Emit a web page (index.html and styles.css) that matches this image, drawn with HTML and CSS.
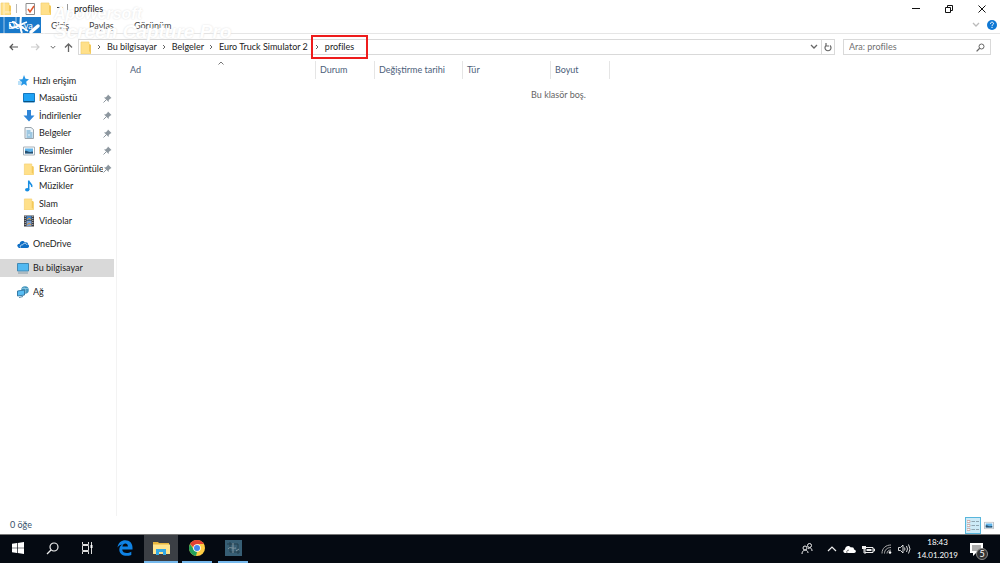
FILE: index.html
```html
<!DOCTYPE html>
<html lang="tr">
<head>
<meta charset="utf-8">
<meta name="viewport" content="width=device-width, initial-scale=1">
<title>profiles</title>
<link rel="stylesheet" href="styles.css">
</head>
<body>
<svg class="defs" aria-hidden="true">
  <symbol id="folder" viewBox="0 0 12 13"><path d="M1 1h8v2l2 1v9H1z" fill="#ffe08a"/><path d="M9 3v7l2 3V4z" fill="#f3c95c"/><path d="M1 1h8v2M1 1v12h10" fill="none" stroke="#f2cf70" stroke-width=".7"/></symbol>
  <symbol id="pin" viewBox="0 0 9 9"><path d="M5 .5 8.500 4l-1 .4-1.700 1.700-.2 1.900L1 3.400l1.900-.2L4.600 1.500z" fill="#8d979f"/><path d="M3.500 5.500.5 8.500" stroke="#8d979f"/></symbol>
  <symbol id="crumb" viewBox="0 0 4 6"><path d="m1 1 2 2-2 2" fill="none" stroke="#555" stroke-width=".9"/></symbol>
  <symbol id="down" viewBox="0 0 8 6"><path d="m1 1 3 3 3-3" fill="none" stroke="currentColor" stroke-width="1.300"/></symbol>
  <symbol id="picture" viewBox="0 0 12 9"><path d="M.5.5h11v8H.5z" fill="#fff" stroke="#a9b1b8"/><path d="M2 2h8v5H2z" fill="#5fb2e8"/><path d="M2 4.500c2-1 3 1 5 1s2-1 3 0V7H2z" fill="#28506f"/></symbol>
</svg>
<div class="window">
  <header class="titlebar">
    <svg class="i12" viewBox="0 0 12 13"><use href="#folder"/></svg>
    <span class="rule"></span>
    <button class="bare prop" aria-label="Özellikler"><svg class="i12" viewBox="0 0 12 13"><path d="M2 1.500h8.500v11H2z" fill="#fff" stroke="#8d8d8d"/><path d="m4 7 2 3 4-6" fill="none" stroke="#e0562b" stroke-width="1.500"/></svg></button>
    <button class="bare" aria-label="Yeni klasör"><svg class="i12" viewBox="0 0 12 13"><use href="#folder"/></svg></button>
    <button class="bare quick" aria-label="Özelleştir"><svg width="6" height="6" viewBox="0 0 6 6"><path d="M0 1.500h6" stroke="#333"/></svg></button>
    <span class="rule"></span>
    <h1 class="title">profiles</h1>
    <div class="caption">
      <button class="bare" aria-label="Simge durumuna küçült"><svg width="8" height="10" viewBox="0 0 8 10"><path d="M0 4.500h8" stroke="#111"/></svg></button>
      <button class="bare" aria-label="Önceki boyut"><svg width="8" height="8" viewBox="0 0 8 8"><path d="M.5 2.500h5v5h-5zM2.500 2V.5h5v5H6" fill="none" stroke="#111"/></svg></button>
      <button class="bare" aria-label="Kapat"><svg width="8" height="8" viewBox="0 0 8 8"><path d="m.5.5 7 7m0-7-7 7" stroke="#111"/></svg></button>
    </div>
  </header>
  <nav class="ribbon">
    <button class="tab file">Dosya</button>
    <button class="tab home">Giriş</button>
    <button class="tab share">Paylaş</button>
    <button class="tab view">Görünüm</button>
    <div class="ribbon-end">
      <button class="bare faint" aria-label="Şeridi genişlet"><svg width="8" height="6"><use href="#down"/></svg></button>
      <button class="bare" aria-label="Yardım"><svg width="10" height="10" viewBox="0 0 10 10"><circle cx="5" cy="5" r="5" fill="#0f78d4"/><path d="M3.500 3.800C3.500 1.500 6.800 1.800 6.500 3.800 6.300 4.800 5 4.700 5 6m0 .8V8" fill="none" stroke="#fff"/></svg></button>
    </div>
  </nav>
  <div class="watermark" aria-hidden="true">
    <svg class="mark" viewBox="0 0 46 44"><path d="M4 0v40h40V22M16 0v22M26 33v8M4 12h22" fill="none" stroke="#fff" stroke-opacity=".3" stroke-width="2"/><path d="M21 14c0 7-2 13 1 19" fill="none" stroke="#fff" stroke-width="2"/><path d="M10 24c0 5 6 4 10 1 2-1 4-2 7-3M12 22c4-1 4 3 7 4 4 1 5 3 9 5" fill="none" stroke="#fff" stroke-width="1.800"/><path d="m31 32 7-6" fill="none" stroke="#fff" stroke-width="3.500" stroke-linecap="round"/></svg>
    <div class="mark-text"><span class="brand">Apowersoft</span><span class="product">Screen Capture Pro</span></div>
  </div>
  <div class="address-row">
    <button class="bare nav-back" aria-label="Geri"><svg width="9" height="8" viewBox="0 0 9 8"><path d="M9 4H1m3-3L1 4l3 3" fill="none" stroke="#555" stroke-width="1.200"/></svg></button>
    <button class="bare nav-next" aria-label="İleri"><svg width="9" height="8" viewBox="0 0 9 8"><path d="M0 4h8M5 1l3 3-3 3" fill="none" stroke="#ccc" stroke-width="1.200"/></svg></button>
    <button class="bare nav-recent" aria-label="Son konumlar"><svg width="6" height="5"><use href="#down"/></svg></button>
    <button class="bare" aria-label="Yukarı"><svg width="9" height="9" viewBox="0 0 9 9"><path d="M4.500 9V1M1 4.500 4.500 1 8 4.500" fill="none" stroke="#666" stroke-width="1.300"/></svg></button>
    <div class="address">
      <svg class="i12" viewBox="0 0 12 13"><use href="#folder"/></svg>
      <ol class="crumbs">
        <li><svg class="chev"><use href="#crumb"/></svg><a href="#">Bu bilgisayar</a></li>
        <li><svg class="chev"><use href="#crumb"/></svg><a href="#">Belgeler</a></li>
        <li><svg class="chev"><use href="#crumb"/></svg><a href="#">Euro Truck Simulator 2</a></li>
        <li class="current"><svg class="chev"><use href="#crumb"/></svg><a href="#">profiles</a></li>
      </ol>
      <button class="bare drop" aria-label="Önceki konumlar"><svg width="8" height="6"><use href="#down"/></svg></button>
      <button class="bare refresh" aria-label="Yenile"><svg width="8" height="9" viewBox="0 0 8 9"><path d="M2 2.500a3 3 0 1 0 4 0M2 0v3h3" fill="none" stroke="#666" stroke-width="1.200"/></svg></button>
    </div>
    <label class="search"><input type="search" placeholder="Ara: profiles" aria-label="Ara: profiles"><svg width="9" height="9" viewBox="0 0 9 9"><circle cx="5.500" cy="3.500" r="2.500" fill="none" stroke="#666"/><path d="M3.700 5.300.6 8.400" stroke="#666" stroke-width="1.300"/></svg></label>
  </div>
  <div class="body">
    <aside class="sidebar">
      <ul class="tree quick-access">
        <li class="node"><svg class="ico" viewBox="0 0 12 12"><path d="m7 0 1.500 3.800 3.500.4-2.800 2.500.8 4L7 9l-3 1.800.8-3.800L2 4.500l3.500-.2z" fill="#2797e6"/><path d="M1 7h3M1 9h3" stroke="#75c2f2"/></svg><a href="#">Hızlı erişim</a></li>
        <li class="node sub"><svg class="ico" viewBox="0 0 12 12"><path d="M.5 1.500h11v8.500H.5z" fill="#1fa3f5" stroke="#1678bf"/><path d="M1 9.500h10" stroke="#0a527f"/></svg><a href="#">Masaüstü</a><svg class="pin"><use href="#pin"/></svg></li>
        <li class="node sub"><svg class="ico" viewBox="0 0 12 12"><path d="M4 0h4v5.500h3.500L6 11.500.5 5.500H4z" fill="#2f86d8"/></svg><a href="#">İndirilenler</a><svg class="pin"><use href="#pin"/></svg></li>
        <li class="node sub"><svg class="ico" viewBox="0 0 12 12"><path d="M2 .5h6l2.500 2v9H2z" fill="#eef5fa" stroke="#9ba5ad"/><path d="M3.500 4h4m-4 2h6m-6 2h2m1 0h3m-6 2h6" stroke="#4e9ac8"/></svg><a href="#">Belgeler</a><svg class="pin"><use href="#pin"/></svg></li>
        <li class="node sub"><svg class="ico"><use href="#picture"/></svg><a href="#">Resimler</a><svg class="pin"><use href="#pin"/></svg></li>
        <li class="node sub"><svg class="ico"><use href="#folder"/></svg><a href="#">Ekran Görüntüleri</a><svg class="pin"><use href="#pin"/></svg></li>
        <li class="node sub"><svg class="ico" viewBox="0 0 12 12"><path d="M5.700 10V.5c0 3 4 3 3 6.500" fill="none" stroke="#168de2" stroke-width="1.500"/><ellipse cx="4.200" cy="9.700" rx="2.200" ry="1.800" fill="#168de2"/></svg><a href="#">Müzikler</a></li>
        <li class="node sub"><svg class="ico"><use href="#folder"/></svg><a href="#">Slam</a></li>
        <li class="node sub"><svg class="ico" viewBox="0 0 12 12"><path d="M1 .5h10v11H1z" fill="#3c3c40"/><path d="M3.500 1h5v4.500h-5z" fill="#4a86c5"/><path d="M3.500 6h5v5h-5z" fill="#7c9fce"/><path d="m4 5 2-2 2 2M4 10l2-2 2 2" fill="none" stroke="#d99840"/><path d="M2.200 1v10m7.600-10v10" stroke="#ccc" stroke-dasharray="1"/></svg><a href="#">Videolar</a></li>
      </ul>
      <ul class="tree roots">
        <li class="node"><svg class="ico" viewBox="0 0 12 12"><path d="M1 9C-.8 7 1.200 5.500 2.500 6 3 3 6 2 8 4.500c2-.5 3 .5 3 2 2 1 1 3.500-.5 3.500H3C1.800 10 1 9.500 1 9z" fill="#0f6fc5"/><path d="M3.500 9.500C2.500 7.500 4.500 6.500 5.500 7c1-2.500 4-2 4.500 0" fill="none" stroke="#fff" stroke-width=".7"/></svg><a href="#">OneDrive</a></li>
        <li class="node selected"><svg class="ico" viewBox="0 0 12 12"><path d="M.5 1.500h11V9H.5z" fill="#52b9f2" stroke="#4289b3"/><path d="M1 11h10" stroke="#8298a5"/></svg><a href="#">Bu bilgisayar</a></li>
        <li class="node"><svg class="ico" viewBox="0 0 12 12"><circle cx="8" cy="4" r="3.800" fill="#4395bd"/><path d="M5 2.500h6M6.500 1c3 2 3 5 0 7" fill="none" stroke="#9bd2eb" stroke-width=".7"/><path d="M.5 5 7.500 4v5L.5 10z" fill="#58bdf4" stroke="#377ba6"/><path d="m2 11.500 4-1" stroke="#538aa9"/></svg><a href="#">Ağ</a></li>
      </ul>
    </aside>
    <main class="files">
      <table class="columns">
        <thead><tr><th class="c-name">Ad<svg class="sort" width="6" height="4" viewBox="0 0 6 4"><path d="M.5 3.500 3 1l2.500 2.500" fill="none" stroke="#777"/></svg></th><th class="c-state">Durum</th><th class="c-wide">Değiştirme tarihi</th><th class="c-wide">Tür</th><th class="c-state">Boyut</th></tr></thead>
      </table>
      <p class="empty">Bu klasör boş.</p>
    </main>
  </div>
  <footer class="status">
    <span class="count">0 öğe</span>
    <button class="bare mode active" aria-label="Ayrıntılar"><svg width="12" height="11" viewBox="0 0 12 11"><path d="M0 .5h3v2H0zm0 4h3v2H0zm0 4h3v2H0z" fill="#fff" stroke="#c59a92" stroke-width=".7"/><path d="M4.500 1.500H8m1 0h3m-7.500 4H8m1 0h3m-7.500 4H8m1 0h3" stroke="#8fa5b1"/></svg></button>
    <button class="bare mode" aria-label="Büyük simgeler"><svg width="10" height="9" viewBox="0 0 12 9"><use href="#picture"/></svg></button>
  </footer>
</div>
<footer class="taskbar">
  <button class="task" aria-label="Başlat"><svg width="12" height="12" viewBox="0 0 12 12"><path d="m0 1.800 5-.7v4.600H0zM5.700 1 12 0v5.700H5.700zM0 6.300h5v4.600l-5-.7zm5.700 0H12V12l-6.300-1z" fill="#fff"/></svg></button>
  <button class="task" aria-label="Ara"><svg width="13" height="13" viewBox="0 0 13 13"><circle cx="8" cy="5" r="4" fill="none" stroke="#eee" stroke-width="1.200"/><path d="m5 8-4 4" stroke="#eee" stroke-width="1.300"/></svg></button>
  <button class="task" aria-label="Görev görünümü"><svg width="13" height="12" viewBox="0 0 13 12"><path d="M1.500 0v2.500h6V0m-6 12V9.500h6V12m-6-8.500h6v5h-6zM10.500 0v12" fill="none" stroke="#ddd"/><path d="M9.500 3h2v3h-2z" fill="#fff"/></svg></button>
  <button class="task edge" aria-label="Microsoft Edge"><svg width="16" height="16" viewBox="0 0 16 16"><path d="M.5 7.500C1.200 2.500 4.500.3 8.300.3c4.500 0 7.200 3 7.200 7.400v1.800H5.200c.2 4 5.500 4.500 9.100 2.200v3.200c-5.500 2.300-12 .5-12-5.300 0-2.800 1.600-4.500 3.700-5.400C3.500 4.500 1.600 5.700.5 7.500zm4.900-1.100h5.500c0-4-5-3.700-5.500 0z" fill="#0f83e5"/></svg></button>
  <button class="task open" aria-label="Dosya Gezgini"><svg width="17" height="14" viewBox="0 0 17 14"><path d="M0 1h5l1 1h10v11H0z" fill="#e8b63f"/><path d="M0 3.500h17V13H0z" fill="#ffe58f"/><path d="M3 14V8h10v6h-3v-3H6v3z" fill="#35a9e4"/></svg></button>
  <button class="task running" aria-label="Google Chrome"><svg width="16" height="16" viewBox="0 0 16 16"><circle cx="8" cy="8" r="8" fill="#ffcd43"/><path d="M1.100 4 5 10l3 2-1 4A8 8 0 0 1 1.100 4z" fill="#23a15b"/><path d="M1.100 4A8 8 0 0 1 14.900 4H8L5 8z" fill="#e34133"/><circle cx="8" cy="8" r="3.800" fill="#fff"/><circle cx="8" cy="8" r="3" fill="#4587ee"/></svg></button>
  <button class="task running" aria-label="Screen Capture Pro"><svg width="17" height="16" viewBox="0 0 17 16"><path d="M0 0h17v16H0z" fill="#375e74"/><path d="M2 4h11v10M5 2v10h10" fill="none" stroke="#253e4c"/><path d="M8 3v10M3 9c2-3 4 0 8-1m0 3 3-2" fill="none" stroke="#8598a2"/></svg></button>
  <div class="tray">
    <button class="bare people" aria-label="Kişiler"><svg width="12" height="12" viewBox="0 0 12 12"><circle cx="4" cy="5" r="2" fill="none" stroke="#eee"/><circle cx="8.500" cy="2.500" r="2" fill="none" stroke="#eee"/><path d="M1 11c0-5 6-5 6-1M7 6c2-2 4-1 4 2" fill="none" stroke="#eee"/></svg></button>
    <button class="bare" aria-label="Gizli simgeler"><svg width="10" height="6" viewBox="0 0 10 6"><path d="m1 5 4-4 4 4" fill="none" stroke="#eee" stroke-width="1.200"/></svg></button>
    <button class="bare" aria-label="OneDrive"><svg width="13" height="9" viewBox="0 0 13 9"><path d="M2 8C-.5 7.500 0 4.500 2 4.500 2 1 6-.5 8 2.500c2-.5 3 .5 3 2 2.500.3 2.500 3.500 0 3.500z" fill="#fff"/><path d="M4 8c-1-2 1-3.500 2-2.500" fill="none" stroke="#111" stroke-width=".6"/></svg></button>
    <button class="bare" aria-label="Pil"><svg width="13" height="9" viewBox="0 0 13 9"><path d="M3 2.500h8v5H3zM11 4h1.500v2H11" fill="none" stroke="#eee"/><path d="M4.500 4h5v2h-5zM0 1h4v3H0z" fill="#eee"/><path d="M2 4v4h2" fill="none" stroke="#eee"/></svg></button>
    <button class="bare" aria-label="Ağ"><svg width="11" height="10" viewBox="0 0 11 10"><path d="M1 9.500C1 4 5 1 10 1M3.500 9.500C3.500 6 6 3.500 10 3.500M6 9.500C6 7.500 7.500 6 10 6" fill="none" stroke="#aaa"/><circle cx="9" cy="8.500" r="1.300" fill="#fff"/></svg></button>
    <button class="bare" aria-label="Ses"><svg width="13" height="10" viewBox="0 0 13 10"><path d="M.5 3.500h2L5 1v8L2.500 6.500h-2zM6.500 3.500q1 1.500 0 3M8.500 2q2 3 0 6M10.500.5q3 4.500 0 9" fill="none" stroke="#eee" stroke-width=".9"/></svg></button>
    <div class="clock"><time>18:43</time><time>14.01.2019</time></div>
    <button class="bare notice" aria-label="Bildirimler"><svg width="13" height="13" viewBox="0 0 13 13"><path d="M0 0h13v10H6l-3 3v-3H0z" fill="#fff"/><path d="M2 3h9M2 5h9M2 7h7" stroke="#333" stroke-width=".8"/></svg><span class="badge">5</span></button>
  </div>
</footer>
</body>
</html>
```
FILE: styles.css
```css
* { box-sizing: border-box; }
body { margin: 0; min-height: 100vh; display: flex; flex-direction: column; background: #fff; color: #1c1c1c; font: 9px/12px Lato, "Noto Sans", sans-serif; overflow: hidden; }
button, input { font: inherit; color: inherit; }
a { color: inherit; text-decoration: none; }
svg { display: block; flex: none; }
ul, ol { list-style: none; margin: 0; padding: 0; }
.defs { position: absolute; width: 0; height: 0; }
.bare { border: 0; padding: 0; background: none; display: flex; align-items: center; justify-content: center; }
.i12 { width: 12px; height: 13px; }
.window { position: relative; flex: 1; display: flex; flex-direction: column; }

.titlebar { display: flex; align-items: center; height: 17px; }
.rule { width: 1px; height: 9px; margin: 0 4px; background: #999; }
.titlebar .prop { margin: 0 4px 0 3px; }
.quick { margin: 0 0 0 5px; }
.title { position: relative; z-index: 2; margin: 0 0 0 2px; font-size: 9px; font-weight: 400; }
.caption { display: flex; gap: 25px; margin-left: auto; padding-right: 14px; }

.ribbon { display: flex; height: 17px; border-bottom: 1px solid #e6e6e6; }
.tab { border: 0; padding: 2px 0 0; background: none; text-align: left; color: #444; }
.file { width: 41px; background: #1979ca; color: #fff; text-align: center; }
.home { padding-left: 10px; width: 48px; }
.share { width: 45px; }
.ribbon-end { display: flex; align-items: center; gap: 7px; margin-left: auto; padding-right: 3px; }
.faint { color: #bbb; }

.watermark { position: absolute; left: 0; top: 0; z-index: 1; display: flex; pointer-events: none; font-family: "Liberation Sans", sans-serif; font-style: italic; font-weight: 700; color: #fff; text-shadow: 0 0 2px #ddd; }
.mark { width: 46px; height: 44px; }
.mark-text { display: flex; flex-direction: column; padding: 6px 0 0 8px; }
.brand { font-size: 16px; line-height: 16px; }
.product { font-size: 19px; line-height: 20px; }

.address-row { display: flex; align-items: center; height: 26px; padding: 0 9px; color: #666; }
.nav-next { margin-left: 13px; }
.nav-recent { margin: 0 8px 0 10px; }
.address { flex: 1; display: flex; align-items: center; height: 16px; margin-left: 5px; border: 1px solid #d9d9d9; padding-left: 1px; }
.crumbs { flex: 1; display: flex; align-items: center; color: #222; }
.crumbs li { display: flex; align-items: center; padding-left: 4px; }
.chev { width: 4px; height: 6px; margin: 0 6px 0 1px; }
.crumbs .current { height: 24px; margin-left: 3px; padding: 0 12px 0 1px; border: 2px solid #ee1c1c; }
.drop { width: 14px; }
.refresh { width: 13px; height: 14px; border-left: 1px solid #d9d9d9; }
.search { display: flex; align-items: center; width: 148px; height: 16px; margin-left: 8px; padding: 0 5px; border: 1px solid #d9d9d9; }
.search input { flex: 1; min-width: 0; border: 0; padding: 0; background: none; outline: 0; appearance: none; }
.search input::placeholder { color: #707070; opacity: 1; }

.body { flex: 1; display: flex; }
.sidebar { width: 117px; padding: 12px 2px 0 0; border-right: 1px solid #f3f3f3; }
.quick-access { display: grid; grid-template-columns: minmax(0, 1fr); grid-auto-rows: 1fr; height: 158px; }
.roots { display: grid; grid-auto-rows: 18px; gap: 6px; margin-top: 5px; }
.node { display: flex; align-items: center; padding: 0 2px 0 17px; white-space: nowrap; }
.node a { flex: 1; min-width: 0; overflow: hidden; margin-left: 4px; }
.sub { padding-left: 23px; }
.ico { width: 12px; height: 12px; }
.selected { background: #d9d9d9; }
.pin { width: 9px; height: 9px; }
.files { flex: 1; padding-top: 1px; }
.columns { border-collapse: separate; border-spacing: 0; table-layout: fixed; width: 492px; color: #4c607a; }
.columns th { position: relative; height: 18px; padding: 0 4px; border-right: 1px solid #e5e5e5; font-weight: 400; text-align: left; }
.columns .c-name { width: 199px; padding-left: 13px; }
.c-state { width: 59px; }
.c-wide { width: 88px; }
.sort { position: absolute; left: 101px; top: 0; }
.empty { margin: 10px 0 0; text-align: center; color: #666; }

.status { display: flex; align-items: center; height: 18px; padding: 0 3px 0 10px; color: #38516c; }
.count { margin-right: auto; }
.mode { width: 16px; height: 17px; }
.mode.active { border: 1px solid #58b6dc; background: #cdeaf7; }

.taskbar { display: flex; height: 29px; border-top: 1px solid #777; background: #050a12; color: #fff; }
.task { width: 35px; display: flex; align-items: center; justify-content: center; border: 0; border-bottom: 2px solid transparent; padding: 0; background: none; }
.edge { width: 39px; }
.running, .open { border-bottom-color: #76b9ed; }
.open { width: 34px; background: #3b3f45; }
.running { width: 30px; margin: 0 2px 0 4px; }
.tray { display: flex; align-items: center; gap: 6px; margin-left: auto; padding-right: 12px; }
.people { margin-right: 8px; }
.clock { display: flex; flex-direction: column; align-items: center; font-size: 8px; line-height: 13px; }
.notice { position: relative; margin-left: 6px; width: 18px; justify-content: flex-start; }
.badge { position: absolute; right: 0; top: 5px; width: 12px; height: 12px; border: 1px solid #888; border-radius: 50%; background: #333; line-height: 10px; text-align: center; }
```
